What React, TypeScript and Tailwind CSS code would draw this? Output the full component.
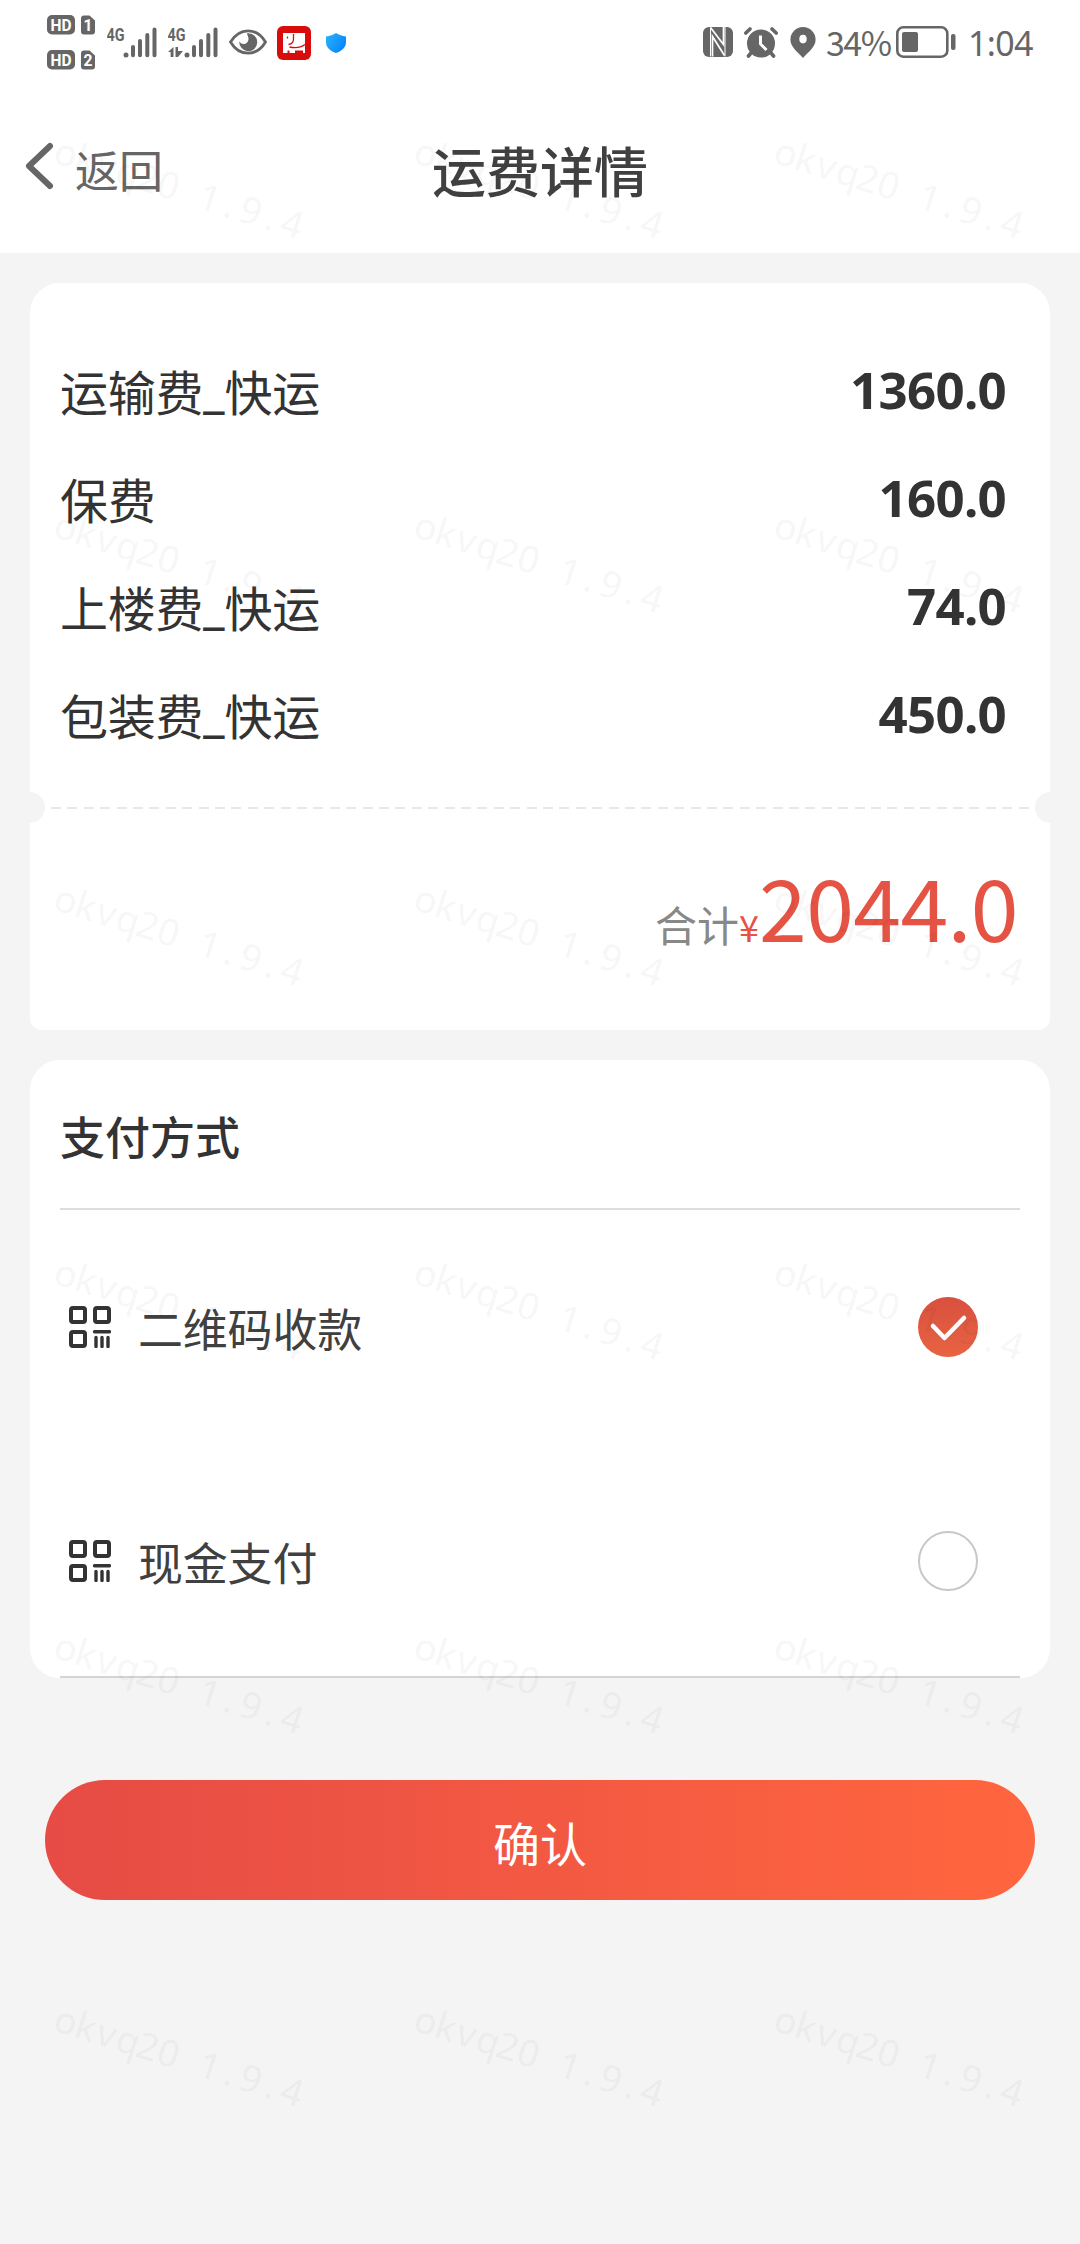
import { clsx } from 'clsx'

const fees = [
  { name: '运输费_快运', amount: '1360.0' },
  { name: '保费', amount: '160.0' },
  { name: '上楼费_快运', amount: '74.0' },
  { name: '包装费_快运', amount: '450.0' },
]

const methods = [
  { id: 'qr', name: '二维码收款', checked: true },
  { id: 'cash', name: '现金支付', checked: false },
]

const WATERMARK = 'okvq20 1.9.4'

function HdBadge({ sim }: { sim: string }) {
  return (
    <svg width="48" height="20" viewBox="0 0 48 20" fill="#666">
      <rect x="0" y="0" width="28" height="19.5" rx="5" />
      <path d="M37 0.5h5.500l5.500 5v11a3 3 0 0 1-3 3h-8a3 3 0 0 1-3-3v-13a3 3 0 0 1 3-3z" />
      <text x="3.500" y="15.500" fontSize="16" fontWeight="700" fill="#fff" textLength="21" lengthAdjust="spacingAndGlyphs" fontFamily="Roboto, sans-serif">HD</text>
      <text x="36.500" y="16" fontSize="16" fontWeight="700" fill="#fff" textLength="9" lengthAdjust="spacingAndGlyphs" fontFamily="Roboto, sans-serif">{sim}</text>
    </svg>
  )
}

function Signal({ data }: { data?: boolean }) {
  return (
    <svg width="50" height="31" viewBox="0 0 50 31" fill="#666">
      <text x="-0.500" y="13.500" fontSize="18.500" fontWeight="700" textLength="18" lengthAdjust="spacingAndGlyphs" fontFamily="Roboto, sans-serif">4G</text>
      {data && <path d="M5.500 20v10H2.600v-5H0zM7.500 20h2.500v4l5 0-5 6H7.500z" />}
      <circle cx="19" cy="28" r="2.500" />
      <g stroke="#666" strokeWidth="4" strokeLinecap="round">
        <path d="M26 20v8.300M33 14v14.300M40.300 8v20.300M47.500 2.500v25.800" />
      </g>
    </svg>
  )
}

function StatusBar() {
  return (
    <div className="flex h-[84px] items-center justify-between pl-[47px] pr-[46px] text-[#666]">
      <div className="flex items-center">
        <div className="flex flex-col gap-[15px]">
          <HdBadge sim="1" />
          <HdBadge sim="2" />
        </div>
        <div className="ml-3 flex gap-[11px]">
          <Signal />
          <Signal data />
        </div>
        <svg className="ml-[11px]" width="38" height="26" viewBox="0 0 38 26">
          <path d="M1.500 13C6 5.500 12 1.800 19 1.800S32 5.500 36.500 13C32 20.500 26 24.200 19 24.200S6 20.500 1.500 13z" fill="none" stroke="#666" strokeWidth="2.800" />
          <path d="M19.500 4.200a9 9 0 1 1-9.200 8.300c3 4.500 9 2.500 9.200-2.500.1-2.500-1.500-4-1.500-5.800z" fill="#666" />
        </svg>
        <svg className="ml-[10px] mt-[1px]" width="34" height="34" viewBox="0 0 34 34">
          <rect width="34" height="34" rx="6" fill="#d90c0c" />
          <path d="M6 7h22v20h-2v-2.500h-8V27h-5.500v-2.500h-2V27H6z" fill="#fff" />
          <path d="M10.500 10.500v2M16.500 8v5c0 3-1.500 5-5 5.500M12.500 21c7 1.500 11.500.5 15.500-2.500" fill="none" stroke="#d90c0c" strokeWidth="1.300" />
        </svg>
        <svg className="ml-[15px] mt-[1px]" width="20" height="20" viewBox="0 0 20 20">
          <defs>
            <linearGradient id="shield" x1="0" x2="1" y1="0" y2="0.600">
              <stop offset="0" stopColor="#27b4fb" />
              <stop offset="1" stopColor="#0a86fb" />
            </linearGradient>
          </defs>
          <path d="M10 0c3 2 6 3 10 3.500V9c0 5.500-4 9-10 11C4 18 0 14.500 0 9V3.500C4 3 7 2 10 0z" fill="url(#shield)" />
        </svg>
      </div>

      <div className="flex items-center">
        <svg width="30" height="30" viewBox="0 0 30 30">
          <rect width="30" height="30" rx="6" fill="#666" />
          <path d="M7.500 0.500l13 17V0M9.500 29.500v-20l12 19" fill="none" stroke="#fff" strokeWidth="1.700" />
          <path d="M7.500 0.500v29M22 0v29.500" fill="none" stroke="#fff" strokeWidth="1" />
        </svg>
        <svg className="ml-[11px]" width="34" height="31" viewBox="0 0 34 31">
          <circle cx="17" cy="16.500" r="14" fill="#666" />
          <path d="M1.800 6L6 2M32.200 6L28 2M7 26l-2.500 3M27 26l2.500 3" stroke="#666" strokeWidth="3.600" strokeLinecap="round" />
          <path d="M16.500 8.500V17l6 6" fill="none" stroke="#fff" strokeWidth="3" />
        </svg>
        <svg className="ml-[12px]" width="26" height="31" viewBox="0 0 26 31">
          <path fillRule="evenodd" d="M13 0a12.600 12.600 0 0 1 12.600 12.600C25.600 20 19 24.500 13 31 7 24.500.4 20 .4 12.600A12.600 12.600 0 0 1 13 0zm0 7.800a3.700 4.300 0 1 0 0 8.600 3.700 4.300 0 0 0 0-8.600z" fill="#666" />
        </svg>
        <span className="ml-[10px] w-[70px] text-[34px] leading-[34px] tracking-[-1.500px]">34%</span>
        <svg width="60" height="32" viewBox="0 0 60 32">
          <rect x="1.300" y="1.300" width="50" height="29.400" rx="6" fill="none" stroke="#666" strokeWidth="2.600" />
          <rect x="6" y="6" width="16" height="20" rx="2" fill="#666" />
          <rect x="55" y="8" width="4.500" height="16" rx="2" fill="#666" />
        </svg>
        <span className="ml-[12px] w-[66px] pt-0.5 font-['Noto_Sans'] text-[34px] leading-[34px] tracking-[-0.700px]">1:04</span>
      </div>
    </div>
  )
}

function QrIcon() {
  return (
    <svg width="42" height="42" viewBox="0 0 42 42" fill="none" stroke="#333">
      <g strokeWidth="4">
        <rect x="2" y="2" width="14" height="14" rx="2" />
        <rect x="26" y="2" width="14" height="14" rx="2" />
        <rect x="2" y="26" width="14" height="14" rx="2" />
      </g>
      <path d="M25.500 25.700h15M27 31.500v9M33 31.500v9M39 31.500v9" strokeWidth="3.400" strokeLinecap="round" />
    </svg>
  )
}

function Radio({ checked }: { checked: boolean }) {
  if (!checked) return <span className="size-[60px] rounded-full border-2 border-[#c8c8c8]" />

  return (
    <span className="flex size-[60px] items-center justify-center rounded-full bg-linear-to-b from-[#d9503f] to-[#e86342]">
      <svg width="60" height="60" viewBox="0 0 60 60" fill="none">
        <path d="M15 29l11.500 12L46 21" stroke="#fff" strokeWidth="4.500" strokeLinecap="round" strokeLinejoin="round" />
      </svg>
    </span>
  )
}

function Watermark() {
  return (
    <div className="pointer-events-none absolute inset-0 grid auto-rows-[373.700px] grid-cols-[360px_360px_360px] overflow-hidden pl-[54px] pt-[133px] font-['Noto_Sans'] text-[38px] font-medium leading-9 text-black/[0.036]">
      {Array.from({ length: 18 }, (_, i) => (
        <div key={i} className="flex h-9 origin-[11px_22px] rotate-[17.500deg]">
          {WATERMARK.split('').map((char, n) => (
            <span key={n} className="w-[21.600px] shrink-0 text-center">{char}</span>
          ))}
        </div>
      ))}
    </div>
  )
}

export default function App() {
  return (
    <div className="relative h-[2244px] w-[1080px] overflow-hidden bg-[#f4f4f4] font-['Noto_Sans_CJK_SC',sans-serif] text-[#333]">
      <header className="h-[253px] bg-white">
        <StatusBar />
        <div className="grid h-[169px] grid-cols-[1fr_auto_1fr] items-center">
          <button className="flex items-center pl-[24px] text-[#666]">
            <svg className="-mt-[6px]" width="30" height="48" viewBox="0 0 30 48" fill="none">
              <path d="M26 4L5 24l21 20" stroke="#666" strokeWidth="6" strokeLinecap="round" strokeLinejoin="round" />
            </svg>
            <span className="ml-[21px] pt-px text-[44px] leading-[60px]">返回</span>
          </button>
          <h1 className="pt-0.5 text-[54px] font-medium leading-[60px] text-[#404040]">运费详情</h1>
        </div>
      </header>

      <main className="px-[30px] pt-[30px]">
        <section className="relative flex h-[747px] flex-col rounded-b-[12px] rounded-t-[30px] bg-white">
          <ul className="pt-[55px]">
            {fees.map((fee) => (
              <li key={fee.name} className="flex h-[108px] items-center justify-between pl-[30px] pr-[44px]">
                <span className="pt-[5px] font-[Roboto,'Noto_Sans_CJK_SC',sans-serif] text-[48px] leading-[60px] tracking-[-0.300px]">{fee.name}</span>
                <span className="pb-1.5 font-['Noto_Sans'] text-[51px] font-bold leading-[60px] tracking-[-0.700px]">{fee.amount}</span>
              </li>
            ))}
          </ul>
          <div className="mx-[21px] mt-[37px] h-[2px] bg-[repeating-linear-gradient(90deg,#e8e8e8_0_10px,transparent_10px_16.400px)]" />
          <span className="absolute -left-[16px] top-[509px] size-[31px] rounded-full bg-[#f4f4f4]" />
          <span className="absolute -right-[16px] top-[509px] size-[31px] rounded-full bg-[#f4f4f4]" />
          <div className="flex items-baseline justify-end pr-[32px] pt-[46px] text-[#e55344]">
            <span className="text-[42px] leading-[60px] text-[#888]">合计</span>
            <span className="text-[36px] leading-[60px]">¥</span>
            <span className="text-[86px] leading-[100px] tracking-[-0.600px]">2044.0</span>
          </div>
        </section>

        <section className="mt-[30px] h-[618px] rounded-[30px] bg-white px-[30px]">
          <h2 className="flex h-[150px] items-center border-b-2 border-[#ddd] pt-[3px] text-[45px] font-medium leading-[60px]">支付方式</h2>
          <ul className="border-b-2 border-[#d4d4d4]">
            {methods.map((method) => (
              <li
                key={method.id}
                className={clsx('flex items-center pl-[9px] pr-[42px] text-[#404040]', method.checked ? 'h-[234px]' : 'h-[232px] pt-0.5')}
              >
                <QrIcon />
                <span className="ml-[27px] flex-1 pt-0.5 text-[45px] leading-[60px] tracking-[-0.200px]">{method.name}</span>
                <Radio checked={method.checked} />
              </li>
            ))}
          </ul>
        </section>

        <button className="mx-[15px] mt-[102px] flex h-[120px] w-[990px] items-center justify-center rounded-full bg-linear-to-r from-[#e64b45] to-[#ff663e] pt-[3px] text-[47px] leading-[60px] text-white">
          确认
        </button>
      </main>

      <Watermark />
    </div>
  )
}
